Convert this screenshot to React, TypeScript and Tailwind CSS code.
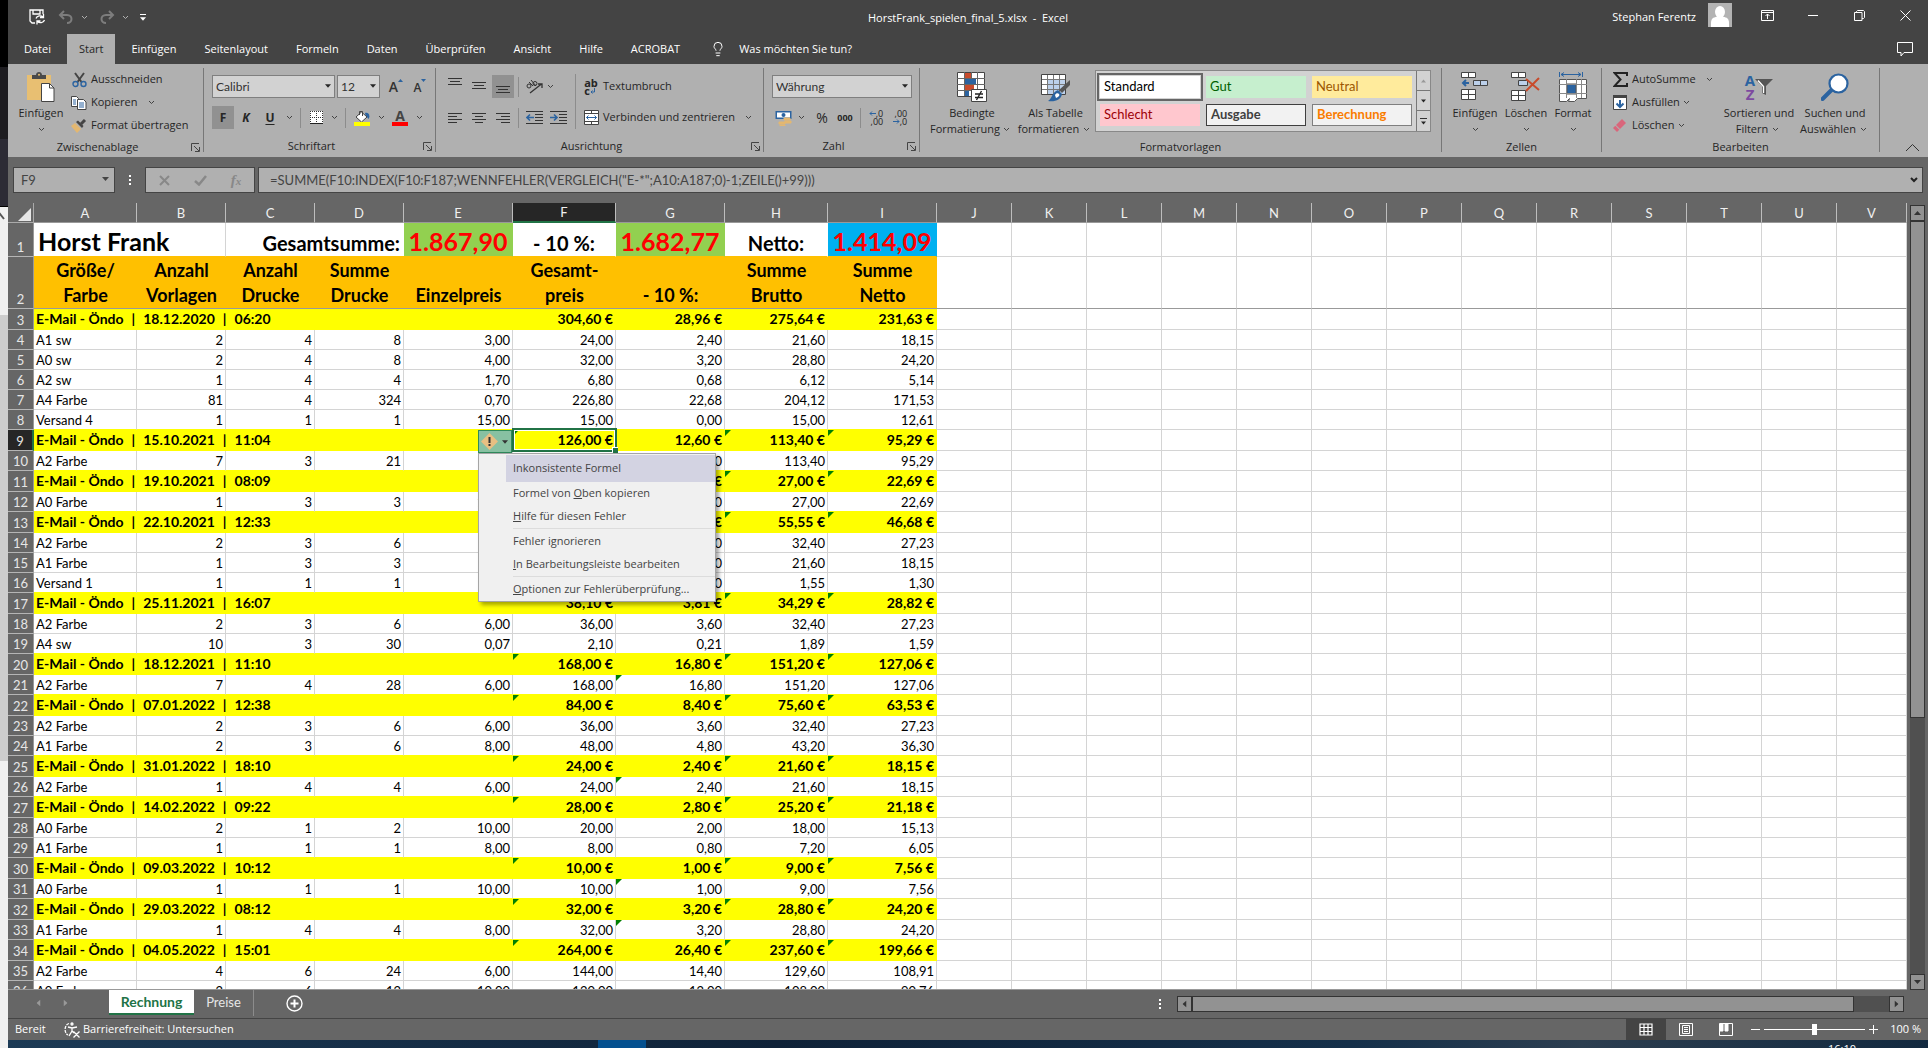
import type { ReactNode } from 'react';
import { clsx } from 'clsx';
import { Lightbulb } from 'lucide-react';

const TABS = ['Datei', 'Start', 'Einfügen', 'Seitenlayout', 'Formeln', 'Daten', 'Überprüfen', 'Ansicht', 'Hilfe', 'ACROBAT'];

/** Sheet columns; V takes whatever width is left in the window. */
const COLUMNS: [string, string][] = [
  ['A', 'w-[103px]'],
  ['B', 'w-[89px]'],
  ['C', 'w-[89px]'],
  ['D', 'w-[89px]'],
  ['E', 'w-[109px]'],
  ['F', 'w-[103px]'],
  ['G', 'w-[109px]'],
  ['H', 'w-[103px]'],
  ['I', 'w-[109px]'],
  ...'JKLMNOPQRSTU'.split('').map((c): [string, string] => [c, 'w-[75px]']),
  ['V', 'w-auto'],
];

const EMPTY = 'JKLMNOPQRSTUV'.split('');

interface SheetRow {
  no: number;
  label: string;
  /** B to I for an item, F to I for an order total. */
  values: string[];
  total?: boolean;
  /** Columns that carry the green error corner. */
  flags?: string;
}

const order = (no: number, when: string, values: string, flags = 'FHI'): SheetRow => ({
  no,
  label: `E-Mail - Öndo | ${when}`,
  values: values.split(' ').map((v) => `${v} €`),
  total: true,
  flags,
});

const item = (no: number, label: string, values: string, flags = ''): SheetRow => ({
  no,
  label,
  values: values.split(' '),
  flags,
});

const ROWS: SheetRow[] = [
  order(3, '18.12.2020 | 06:20', '304,60 28,96 275,64 231,63', ''),
  item(4, 'A1 sw', '2 4 8 3,00 24,00 2,40 21,60 18,15'),
  item(5, 'A0 sw', '2 4 8 4,00 32,00 3,20 28,80 24,20'),
  item(6, 'A2 sw', '1 4 4 1,70 6,80 0,68 6,12 5,14'),
  item(7, 'A4 Farbe', '81 4 324 0,70 226,80 22,68 204,12 171,53'),
  item(8, 'Versand 4', '1 1 1 15,00 15,00 0,00 15,00 12,61'),
  order(9, '15.10.2021 | 11:04', '126,00 12,60 113,40 95,29'),
  item(10, 'A2 Farbe', '7 3 21 6,00 126,00 12,60 113,40 95,29'),
  order(11, '19.10.2021 | 08:09', '30,00 3,00 27,00 22,69'),
  item(12, 'A0 Farbe', '1 3 3 10,00 30,00 3,00 27,00 22,69'),
  order(13, '22.10.2021 | 12:33', '61,55 6,00 55,55 46,68'),
  item(14, 'A2 Farbe', '2 3 6 6,00 36,00 3,60 32,40 27,23'),
  item(15, 'A1 Farbe', '1 3 3 8,00 24,00 2,40 21,60 18,15'),
  item(16, 'Versand 1', '1 1 1 1,55 1,55 0,00 1,55 1,30'),
  order(17, '25.11.2021 | 16:07', '38,10 3,81 34,29 28,82'),
  item(18, 'A2 Farbe', '2 3 6 6,00 36,00 3,60 32,40 27,23'),
  item(19, 'A4 sw', '10 3 30 0,07 2,10 0,21 1,89 1,59'),
  order(20, '18.12.2021 | 11:10', '168,00 16,80 151,20 127,06'),
  item(21, 'A2 Farbe', '7 4 28 6,00 168,00 16,80 151,20 127,06', 'G'),
  order(22, '07.01.2022 | 12:38', '84,00 8,40 75,60 63,53'),
  item(23, 'A2 Farbe', '2 3 6 6,00 36,00 3,60 32,40 27,23'),
  item(24, 'A1 Farbe', '2 3 6 8,00 48,00 4,80 43,20 36,30'),
  order(25, '31.01.2022 | 18:10', '24,00 2,40 21,60 18,15'),
  item(26, 'A2 Farbe', '1 4 4 6,00 24,00 2,40 21,60 18,15', 'G'),
  order(27, '14.02.2022 | 09:22', '28,00 2,80 25,20 21,18'),
  item(28, 'A0 Farbe', '2 1 2 10,00 20,00 2,00 18,00 15,13'),
  item(29, 'A1 Farbe', '1 1 1 8,00 8,00 0,80 7,20 6,05'),
  order(30, '09.03.2022 | 10:12', '10,00 1,00 9,00 7,56'),
  item(31, 'A0 Farbe', '1 1 1 10,00 10,00 1,00 9,00 7,56', 'G'),
  order(32, '29.03.2022 | 08:12', '32,00 3,20 28,80 24,20'),
  item(33, 'A1 Farbe', '1 4 4 8,00 32,00 3,20 28,80 24,20', 'G'),
  order(34, '04.05.2022 | 15:01', '264,00 26,40 237,60 199,66'),
  item(35, 'A2 Farbe', '4 6 24 6,00 144,00 14,40 129,60 108,91'),
  item(36, 'A0 Farbe', '2 6 12 10,00 120,00 12,00 108,00 90,76'),
];

const HEADINGS = [
  ['Größe/', 'Farbe'],
  ['Anzahl', 'Vorlagen'],
  ['Anzahl', 'Drucke'],
  ['Summe', 'Drucke'],
  ['Einzelpreis'],
  ['Gesamt-', 'preis'],
  ['- 10 %:'],
  ['Summe', 'Brutto'],
  ['Summe', 'Netto'],
];

/* ---------- small shared pieces ---------- */

function Chev({ className = 'w-[14px]' }: { className?: string }) {
  return (
    <span className={clsx('flex shrink-0 justify-center', className)}>
      <svg width="7" height="5" viewBox="0 0 7 5" fill="none" stroke="currentColor" opacity="0.8">
        <path d="M1 1l2.500 2.500L6 1" />
      </svg>
    </span>
  );
}

function Caret({ className }: { className?: string }) {
  return (
    <svg className={className} width="7" height="4" viewBox="0 0 7 4" fill="currentColor">
      <path d="M0 0h7L3.500 4z" />
    </svg>
  );
}

function Sep({ className = 'h-5' }: { className?: string }) {
  return <span className={clsx('mx-1 w-px shrink-0 bg-[#8c8c8c]', className)} />;
}

function IconBtn({ label, active, className = 'w-[22px]', children }: { label: string; active?: boolean; className?: string; children: ReactNode }) {
  return (
    <button
      type="button"
      aria-label={label}
      className={clsx('flex h-[23px] shrink-0 items-center justify-center', className, active && 'bg-[#919191]')}
    >
      {children}
    </button>
  );
}

function SmallBtn({ icon, label, chev, wide }: { icon: ReactNode; label: string; chev?: boolean; wide?: boolean }) {
  return (
    <button type="button" className="flex h-[23px] items-center whitespace-nowrap">
      <span className="mr-1 flex w-4 justify-center">{icon}</span>
      {label}
      {chev && <Chev className={wide ? 'w-7' : 'w-[14px]'} />}
    </button>
  );
}

function BigBtn({ icon, lines, className }: { icon: ReactNode; lines: [string, string?]; className?: string }) {
  return (
    <button type="button" className={clsx('flex shrink-0 flex-col items-center pt-2 leading-4 whitespace-nowrap', className)}>
      <span className="mb-[3px] flex h-[30px] items-center justify-center">{icon}</span>
      <span>{lines[0]}</span>
      <span className="flex h-4 items-center">
        {lines[1]}
        <Chev className={lines[1] ? 'w-[14px]' : 'w-2'} />
      </span>
    </button>
  );
}

function Group({ title, launcher, className, children }: { title: string; launcher?: boolean; className: string; children: ReactNode }) {
  return (
    <section className={clsx('flex shrink-0', className)}>
      <div className="flex min-w-0 flex-1 flex-col">
        <div className="flex h-[74px]">{children}</div>
        <div className="flex h-[21px] items-center">
          <span className="flex-1 text-center">{title}</span>
          {launcher && (
            <button type="button" aria-label={`${title} öffnen`} className="flex w-4 justify-end pr-[3px]">
              <svg width="9" height="9" viewBox="0 0 9 9" fill="none" stroke="#444">
                <path d="M.5 8V.5H8M3 3l5 5M8.500 4v4.500H4" />
              </svg>
            </button>
          )}
        </div>
      </div>
      <span className="mt-1 h-[84px] w-px bg-[#777]" />
    </section>
  );
}

function PickList({ label, value, className }: { label: string; value: string; className: string }) {
  return (
    <span className={clsx('relative flex h-[23px] shrink-0', className)}>
      <select aria-label={label} className="w-full appearance-none border border-[#7f7f7f] bg-[#d2d2d2] pl-[3px] font-['Lato',sans-serif] text-xs text-[#333]">
        <option>{value}</option>
      </select>
      <Caret className="pointer-events-none absolute top-[9px] right-[4px] w-[6px]" />
    </span>
  );
}

/** Horizontal strokes, given as [x1, x2] pairs. */
function Lines({ rows, gap = 3 }: { rows: [number, number][]; gap?: number }) {
  return (
    <svg width="14" height="12" viewBox="0 0 14 12" stroke="#333">
      {rows.map(([a, b], i) => (
        <path key={i} d={`M${a} ${i * gap + 1.5}H${b}`} />
      ))}
    </svg>
  );
}

/* ---------- ribbon ---------- */

function ClipboardGroup() {
  return (
    <Group title="Zwischenablage" launcher className="w-[196px]">
      <BigBtn
        className="w-[60px] pl-[6px]"
        lines={['Einfügen']}
        icon={
          <svg width="30" height="30" viewBox="0 0 30 30">
            <path d="M1 3h24v25H1z" fill="#e8bf72" />
            <path d="M6 7V3h4c0-4 6-4 6 0h4v4z" fill="#4a4a4a" />
            <circle cx="13" cy="2.800" r="1" fill="#e8bf72" />
            <path d="M15.500 11.500h8l4.500 4.500v13.500H15.500z" fill="#fff" stroke="#444" />
            <path d="M23.500 11.500V16H28" fill="none" stroke="#444" />
          </svg>
        }
      />
      <div className="pt-1 pl-[3px]">
        <SmallBtn
          label="Ausschneiden"
          icon={
            <svg width="15" height="16" viewBox="0 0 15 16" fill="none">
              <path d="M3 1l6.500 9M12 1L5.500 10" stroke="#444" strokeWidth="2" />
              <circle cx="3.500" cy="12" r="2.500" stroke="#2b63a0" strokeWidth="1.400" />
              <circle cx="11.500" cy="12" r="2.500" stroke="#2b63a0" strokeWidth="1.400" />
            </svg>
          }
        />
        <SmallBtn
          label="Kopieren"
          chev
          wide
          icon={
            <svg width="16" height="14" viewBox="0 0 16 14" fill="#fff" stroke="#444">
              <path d="M.5.5h5l2 2v8h-7z" />
              <path d="M2 4h3M2 6h3M2 8h3" stroke="#2b63a0" />
              <path d="M6.500 3.500h6l2.500 2.500v7.500H6.500z" />
              <path d="M8 7h5M8 9h5M8 11h5" stroke="#2b63a0" />
            </svg>
          }
        />
        <SmallBtn
          label="Format übertragen"
          icon={
            <svg width="16" height="14" viewBox="0 0 16 14">
              <path d="M0 7l4-3 6 6-4 4z" fill="#e3b770" />
              <path d="M5 3l2-1.500 5.500 5.500L11 9z" fill="#444" />
              <path d="M10 5l4-4" stroke="#444" strokeWidth="3" />
            </svg>
          }
        />
      </div>
    </Group>
  );
}

function FontGroup() {
  return (
    <Group title="Schriftart" launcher className="w-[232px]">
      <div className="flex flex-col gap-2 pt-[11px] pl-2">
        <div className="flex items-center">
          <PickList label="Schriftart" value="Calibri" className="mr-0.5 w-[123px]" />
          <PickList label="Schriftgrad" value="12" className="mr-1 w-[43px]" />
          <IconBtn label="Schriftgrad vergrößern" className="w-6">
            <span className="text-[14px] font-semibold text-[#333]">A</span>
            <svg className="mb-3" width="5" height="3" viewBox="0 0 5 3" fill="#2b63a0"><path d="M0 3h5L2.500 0z" /></svg>
          </IconBtn>
          <IconBtn label="Schriftgrad verkleinern" className="w-6">
            <span className="pt-0.5 text-xs font-semibold text-[#333]">A</span>
            <svg className="mb-3" width="5" height="3" viewBox="0 0 5 3" fill="#2b63a0"><path d="M0 0h5L2.500 3z" /></svg>
          </IconBtn>
        </div>
        <div className="flex items-center">
          <IconBtn label="Fett" active><b className="text-xs">F</b></IconBtn>
          <IconBtn label="Kursiv" className="w-6"><b className="text-xs italic">K</b></IconBtn>
          <IconBtn label="Unterstrichen" className="w-6"><b className="text-xs underline underline-offset-2">U</b></IconBtn>
          <Chev />
          <Sep />
          <IconBtn label="Rahmen">
            <svg width="13" height="13" viewBox="0 0 13 13">
              <path d="M0 0h13v13H0z" fill="#fff" />
              <path d="M.5 0v12M6.500 0v12M12.500 0v12M0 .5h13M0 6.500h13" stroke="#333" strokeDasharray="1 1" />
              <path d="M0 12.500h13" stroke="#222" />
            </svg>
          </IconBtn>
          <Chev />
          <Sep />
          <IconBtn label="Füllfarbe" className="w-6">
            <svg width="16" height="16" viewBox="0 0 16 16">
              <path d="M11 3c4-1 5.500 3 3.500 6l-3-4z" fill="#2b63a0" />
              <path d="M7.500 2L13 7l-5.500 5L2 7z" fill="#fff" stroke="#444" />
              <path d="M5.500 5V1.500h3V6" fill="none" stroke="#444" />
              <path d="M0 12h16v4H0z" fill="#ff0" />
            </svg>
          </IconBtn>
          <Chev />
          <IconBtn label="Schriftfarbe" className="w-6">
            <span className="flex flex-col items-center">
              <b className="h-3 text-[14px] leading-3 text-[#444]">A</b>
              <i className="h-1 w-4 bg-[#f00]" />
            </span>
          </IconBtn>
          <Chev />
        </div>
      </div>
    </Group>
  );
}

function Indent({ flip }: { flip?: boolean }) {
  return (
    <svg width="17" height="13" viewBox="0 0 17 13" fill="none" stroke="#333">
      <path d="M0 .5h17M9 3.500h8M9 6.500h8M9 9.500h8M0 12.500h17" />
      <path d={flip ? 'M0 6.500h7M4 3.500l3 3-3 3' : 'M8 6.500H1M4 3.500l-3 3 3 3'} stroke="#2b63a0" strokeWidth="1.600" />
    </svg>
  );
}

function AlignGroup() {
  return (
    <Group title="Ausrichtung" launcher className="w-[328px]">
      <div className="flex flex-col gap-2 pt-[11px] pl-2">
        <div className="flex items-center">
          <IconBtn label="Oben ausrichten"><span className="pb-2"><Lines rows={[[0, 14], [2, 12], [0, 14]]} /></span></IconBtn>
          <IconBtn label="Zentriert ausrichten" className="mx-0.5 w-[22px]"><Lines rows={[[0, 14], [2, 12], [0, 14]]} /></IconBtn>
          <IconBtn label="Unten ausrichten" active><span className="pt-2"><Lines rows={[[0, 14], [2, 12], [0, 14]]} /></span></IconBtn>
          <Sep />
          <IconBtn label="Ausrichtung">
            <svg width="17" height="15" viewBox="0 0 17 15" fill="none" stroke="#333">
              <circle cx="3" cy="7" r="2" /><path d="M3 3l4 4" />
              <circle cx="9" cy="4.500" r="2" /><path d="M5 1l5 6" />
              <path d="M4 14L15.500 5M12 5h4v4" strokeWidth="1.300" />
            </svg>
          </IconBtn>
          <Chev className="w-[10px]" />
        </div>
        <div className="flex items-center">
          <IconBtn label="Linksbündig"><Lines rows={[[0, 14], [0, 9], [0, 14], [0, 9]]} /></IconBtn>
          <IconBtn label="Zentriert" className="mx-0.5 w-[22px]"><Lines rows={[[0, 14], [3, 11], [0, 14], [3, 11]]} /></IconBtn>
          <IconBtn label="Rechtsbündig"><Lines rows={[[0, 14], [5, 14], [0, 14], [5, 14]]} /></IconBtn>
          <Sep />
          <IconBtn label="Einzug verkleinern"><Indent /></IconBtn>
          <IconBtn label="Einzug vergrößern" className="w-[26px]"><Indent flip /></IconBtn>
        </div>
      </div>
      <Sep className="mt-[10px] h-[55px]" />
      <div className="flex flex-col gap-2 pt-[11px] pl-[3px]">
        <SmallBtn
          label="Textumbruch"
          icon={
            <span className="flex flex-col text-left text-[11px] leading-[8px] font-bold">
              <span>ab</span>
              <span className="flex">
                c
                <svg width="5" height="7" viewBox="0 0 5 7" fill="none" stroke="#2b63a0"><path d="M4.500 1v4H1M2.500 3.500L1 5l1.500 1.500" /></svg>
              </span>
            </span>
          }
        />
        <SmallBtn
          label="Verbinden und zentrieren"
          chev
          wide
          icon={
            <svg width="15" height="15" viewBox="0 0 15 15" fill="none" stroke="#444">
              <path d="M.5.5h14v14H.5z" fill="#fff" />
              <path d="M.5 3.500h14M.5 11.500h14M7.500 0v3.500M7.500 11.500V15" />
              <path d="M2.500 7.500h10M4.500 5.500l-2 2 2 2M10.500 5.500l2 2-2 2" stroke="#2b63a0" />
            </svg>
          }
        />
      </div>
    </Group>
  );
}

function Decimals({ less }: { less?: boolean }) {
  return (
    <span className="flex flex-col text-[9px] leading-[8px] text-[#222]">
      <span className="flex items-center justify-end">
        {!less && <svg width="7" height="5" viewBox="0 0 7 5" fill="none" stroke="#2b63a0"><path d="M7 2.500H1M3 .5l-2 2 2 2" /></svg>}
        {less ? ',00' : ',0'}
      </span>
      <span className="flex items-center justify-end">
        {less && <svg width="7" height="5" viewBox="0 0 7 5" fill="none" stroke="#2b63a0"><path d="M0 2.500h6M4 .5l2 2-2 2" /></svg>}
        {less ? ',0' : ',00'}
      </span>
    </span>
  );
}

function NumberGroup() {
  return (
    <Group title="Zahl" launcher className="w-[156px]">
      <div className="flex flex-col gap-2 pt-[11px] pl-2">
        <PickList label="Zahlenformat" value="Währung" className="w-[140px]" />
        <div className="flex items-center">
          <IconBtn label="Buchhaltungszahlenformat">
            <svg width="17" height="16" viewBox="0 0 17 16">
              <path d="M.5 1h16v8H.5z" fill="#2b63a0" />
              <path d="M2 2.500h13v5H2z" fill="#fff" />
              <circle cx="8.500" cy="5" r="2" fill="#2b63a0" />
              <path d="M9 8h6v2H9zM10 11h6v2h-6zM4 12h6v2H4zM5 15h5v1H5z" fill="#e3b770" stroke="#e3b770" />
            </svg>
          </IconBtn>
          <Chev />
          <IconBtn label="Prozentformat" className="ml-0.5 w-6"><span className="text-[14px]">%</span></IconBtn>
          <IconBtn label="1.000er-Trennzeichen"><b className="text-[9px]">000</b></IconBtn>
          <Sep />
          <IconBtn label="Dezimalstelle hinzufügen"><Decimals /></IconBtn>
          <IconBtn label="Dezimalstelle löschen" className="w-[26px]"><Decimals less /></IconBtn>
        </div>
      </div>
    </Group>
  );
}

const CELL_STYLES: [string, string][] = [
  ['Standard', 'bg-white text-black outline-2 outline-offset-1 outline-[#666]'],
  ['Gut', 'bg-[#c6efce] text-[#006100]'],
  ['Neutral', 'bg-[#ffeb9c] text-[#9c5700]'],
  ['Schlecht', 'bg-[#ffc7ce] text-[#9c0006]'],
  ['Ausgabe', 'border border-[#3f3f3f] bg-[#f2f2f2] font-bold text-[#3f3f3f]'],
  ['Berechnung', 'border border-[#7f7f7f] bg-[#f2f2f2] font-bold text-[#fa7d00]'],
];

function StylesGroup() {
  return (
    <Group title="Formatvorlagen" className="w-[522px]">
      <BigBtn
        className="ml-2 w-[88px]"
        lines={['Bedingte', 'Formatierung']}
        icon={
          <svg width="30" height="30" viewBox="0 0 30 30">
            <path d="M.5.5h27v24H.5z" fill="#fff" stroke="#444" />
            <path d="M8 1h6v5H8zM8 13h9v5H8z" fill="#c84b2c" />
            <path d="M8 7h11v5H8zM8 19h4v5H8z" fill="#2b63a0" />
            <path d="M7.500 0v24M14.500 0v7M20.500 0v24M0 6.500h28M0 12.500h28M0 18.500h28" stroke="#666" />
            <path d="M14.500 17.500h15v12h-15z" fill="#fff" stroke="#444" />
            <path d="M18 22h8M18 25.500h8M24.500 19l-5 9" stroke="#222" strokeWidth="1.400" />
          </svg>
        }
      />
      <BigBtn
        className="w-[79px]"
        lines={['Als Tabelle', 'formatieren']}
        icon={
          <svg width="30" height="30" viewBox="0 0 30 30">
            <path d="M.5 2.500h24v20H.5z" fill="#fff" stroke="#444" />
            <path d="M7 8h17v14H7z" fill="#bcd0ea" />
            <path d="M6.500 3v19M12.500 3v19M18.500 3v19M1 7.500h23M1 12.500h23M1 17.500h23" stroke="#777" />
            <path d="M29 8v5l-8 8-3-3z" fill="#555" />
            <path d="M17 18l4 4c-1 6-7 8-14 7 4-2 4-9 10-11z" fill="#2b63a0" />
            <path d="M14 23c1-2 3-2 4-1s0 3-3 4z" fill="#fff" />
          </svg>
        }
      />
      <div className="mt-[6px] mr-[10px] flex h-[62px] flex-1 border border-[#888] bg-[#d2d2d2]">
        <div className="grid flex-1 grid-cols-3 gap-[6px] py-[5px] pr-1 pl-1">
          {CELL_STYLES.map(([name, cls]) => (
            <button key={name} type="button" className={clsx("flex h-[22px] items-center pl-1 font-['Lato',sans-serif] text-[13px]", cls)}>
              {name}
            </button>
          ))}
        </div>
        <div className="grid w-[14px] grid-rows-3 divide-y divide-[#777] border-l border-[#777]">
          <button type="button" aria-label="Nach oben" className="flex items-center justify-center text-[#999]"><Caret className="w-[5px] rotate-180" /></button>
          <button type="button" aria-label="Nach unten" className="flex items-center justify-center"><Caret className="w-[5px]" /></button>
          <button type="button" aria-label="Mehr" className="flex flex-col items-center justify-center gap-0.5">
            <i className="h-px w-[7px] bg-[#333]" />
            <Caret className="w-[5px]" />
          </button>
        </div>
      </div>
    </Group>
  );
}

function CellsGroup() {
  return (
    <Group title="Zellen" className="w-[160px]">
      <BigBtn
        className="ml-[7px] w-[52px]"
        lines={['Einfügen']}
        icon={
          <svg width="28" height="30" viewBox="0 0 28 30" fill="#fff" stroke="#444">
            <path d="M.5.500h14v5H.5zM7.500.500v5M.5 17.500h14v10H.5zM7.500 17.500v10M.5 22.500h14" />
            <path d="M12.500 8.500h14v5h-14zM19.500 8.500v5" fill="#bcd0ea" />
            <path d="M8 11H2M5 8l-3 3 3 3" fill="none" stroke="#2b63a0" strokeWidth="2" />
          </svg>
        }
      />
      <BigBtn
        className="w-[50px]"
        lines={['Löschen']}
        icon={
          <svg width="30" height="30" viewBox="0 0 30 30" fill="#fff" stroke="#444">
            <path d="M.5.500h14v5H.5zM7.500.500v5M.5 18.500h14v10H.5zM7.500 18.500v10M.5 23.500h14" />
            <path d="M7.500 8.500h9v5h-9z" fill="#bcd0ea" />
            <path d="M15 7l13 11M28 6L15 19" stroke="#c84b2c" strokeWidth="2" />
          </svg>
        }
      />
      <BigBtn
        className="w-[44px]"
        lines={['Format']}
        icon={
          <svg width="29" height="30" viewBox="0 0 29 30" fill="none" stroke="#555">
            <path d="M.5 0v5M23.500 0v5M2 2.500h20M5 .5l-3 2 3 2M19 .5l3 2-3 2" stroke="#2b63a0" />
            <path d="M.5 7.500h27v19h-9l-3 3h-6l1-3-3 3h-7z" fill="#fff" />
            <path d="M8 12h9v10H8z" fill="#2b63a0" />
            <path d="M7.500 7v19M17.500 7v19M22.500 7v19M0 12.500h28M0 21.500h28" stroke="#888" />
          </svg>
        }
      />
    </Group>
  );
}

function EditGroup() {
  return (
    <Group title="Bearbeiten" className="w-[278px]">
      <div className="w-[118px] pt-1 pl-[10px]">
        <SmallBtn
          label="AutoSumme"
          chev
          wide
          icon={<svg width="15" height="15" viewBox="0 0 15 15" fill="none" stroke="#222" strokeWidth="2"><path d="M14 4V1H1.500l6 6.500L1.500 14H14v-3" /></svg>}
        />
        <SmallBtn
          label="Ausfüllen"
          chev
          icon={
            <svg width="14" height="15" viewBox="0 0 14 15">
              <path d="M.5.500h13v14H.5z" fill="#fff" stroke="#444" />
              <path d="M0 0h14v3H0z" fill="#444" />
              <path d="M7 5v7M3.500 8.500L7 12l3.500-3.500" fill="none" stroke="#2b63a0" strokeWidth="2" />
            </svg>
          }
        />
        <SmallBtn
          label="Löschen"
          chev
          icon={
            <svg width="14" height="13" viewBox="0 0 14 13" fill="#d9667b">
              <path d="M9 0l4 4-6 6-4-4z" />
              <path d="M2.300 6.700l4 4L4 13 0 9z" />
            </svg>
          }
        />
      </div>
      <BigBtn
        className="w-[78px]"
        lines={['Sortieren und', 'Filtern']}
        icon={
          <span className="flex items-center">
            <span className="flex flex-col items-center text-[15px] leading-[14px] font-bold">
              <span className="text-[#2b63a0]">A</span>
              <span className="text-[#7d4aa0]">Z</span>
            </span>
            <svg width="18" height="18" viewBox="0 0 18 18">
              <path d="M0 1h18l-7 7v9l-4-2V8z" fill="#555" />
              <path d="M3 2.500l5.500 6V15" fill="none" stroke="#fff" strokeWidth="1.400" />
            </svg>
          </span>
        }
      />
      <BigBtn
        className="w-[74px]"
        lines={['Suchen und', 'Auswählen']}
        icon={
          <svg width="28" height="28" viewBox="0 0 28 28">
            <path d="M1.500 26L11 16.500" stroke="#2b63a0" strokeWidth="4" strokeLinecap="round" />
            <circle cx="17.500" cy="10.500" r="9" fill="#fff" stroke="#2b63a0" strokeWidth="2.200" />
          </svg>
        }
      />
    </Group>
  );
}

function Ribbon() {
  return (
    <div className="flex h-[93px] shrink-0 overflow-hidden bg-[#b0b0b0] text-[#262626]">
      <ClipboardGroup />
      <FontGroup />
      <AlignGroup />
      <NumberGroup />
      <StylesGroup />
      <CellsGroup />
      <EditGroup />
      <button type="button" aria-label="Menüband reduzieren" className="mt-auto mr-2 mb-[5px] ml-auto">
        <svg width="15" height="9" viewBox="0 0 15 9" fill="none" stroke="#333"><path d="M1 8l6.500-6.500L14 8" /></svg>
      </button>
    </div>
  );
}

/* ---------- window chrome ---------- */

function TitleBar() {
  return (
    <header className="grid h-[34px] shrink-0 grid-cols-[1fr_auto_1fr] items-center">
      <div className="flex items-center gap-[7px] pl-[21px]">
        <button type="button" aria-label="Speichern">
          <svg width="17" height="16" viewBox="0 0 17 16" fill="none" stroke="#fff" strokeWidth="1.300">
            <path d="M6 14H3L1 12V1h13v4M4 1v4h7V1" />
            <path d="M7 9.500c1-3 5-3.500 7-1.500M14.500 5v3.500H11M15.500 11c-1 3-5 3.500-7 1.500M8 15.500V12h3.500" />
          </svg>
        </button>
        <button type="button" aria-label="Rückgängig" className="ml-[5px] flex items-center text-[#7d7d7d]">
          <svg width="16" height="14" viewBox="0 0 16 14" fill="none" stroke="currentColor" strokeWidth="2"><path d="M6 1L2 5l4 4M2 5h7c6 0 6 8 0 8" /></svg>
          <Chev className="ml-0.5 w-4 text-[#ccc]" />
        </button>
        <button type="button" aria-label="Wiederholen" className="flex items-center text-[#7d7d7d]">
          <svg width="16" height="14" viewBox="0 0 16 14" fill="none" stroke="currentColor" strokeWidth="2"><path d="M10 1l4 4-4 4M14 5H7c-6 0-6 8 0 8" /></svg>
          <Chev className="ml-0.5 w-4 text-[#ccc]" />
        </button>
        <button type="button" aria-label="Symbolleiste anpassen" className="flex flex-col items-center gap-0.5">
          <i className="h-px w-[6px] bg-white" />
          <Caret className="w-[6px]" />
        </button>
      </div>
      <h1 className="pt-0.5 whitespace-pre">HorstFrank_spielen_final_5.xlsx  -  Excel</h1>
      <div className="flex items-center justify-end">
        <span className="mr-3">Stephan Ferentz</span>
        <svg className="mr-3 -mt-1" width="24" height="24" viewBox="0 0 24 24">
          <path d="M0 0h24v24H0z" fill="#b3b3b3" />
          <path d="M3 24v-4c0-4 2-6 6-6h6c4 0 6 2 6 6v4z" fill="#fff" />
          <ellipse cx="12" cy="9" rx="5" ry="6" fill="#fff" />
        </svg>
        <button type="button" aria-label="Menüband-Anzeigeoptionen" className="flex w-[46px] justify-center pb-1">
          <svg width="13" height="11" viewBox="0 0 13 11" fill="none" stroke="#fff"><path d="M.5.500h12v10H.5zM.5 2.500h12M6.500 9V4M4.500 6l2-2 2 2" /></svg>
        </button>
        <button type="button" aria-label="Minimieren" className="flex w-[46px] justify-center pb-1"><i className="h-px w-[10px] bg-white" /></button>
        <button type="button" aria-label="Verkleinern" className="flex w-[46px] justify-center pb-1">
          <svg width="11" height="11" viewBox="0 0 11 11" fill="none" stroke="#fff"><path d="M.5 2.500h7.500v8H.5zM2.500 2.500V1.500l1-1h6l1 1v6l-1 1H8" /></svg>
        </button>
        <button type="button" aria-label="Schließen" className="flex w-[46px] justify-center pb-1">
          <svg width="11" height="11" viewBox="0 0 11 11" stroke="#fff"><path d="M.5.500l10 10M10.500.500l-10 10" /></svg>
        </button>
      </div>
    </header>
  );
}

function TabBar() {
  return (
    <nav className="flex h-[30px] shrink-0 items-center pl-0.5">
      {TABS.map((tab) => (
        <button
          key={tab}
          type="button"
          className={clsx('h-full', tab === 'Start' ? 'mx-0.5 bg-[#b0b0b0] px-3 text-[#262626]' : 'px-[14px] text-white')}
        >
          {tab}
        </button>
      ))}
      <button type="button" className="ml-4 flex items-center gap-[13px]">
        <Lightbulb size={16} strokeWidth={1.5} />
        Was möchten Sie tun?
      </button>
      <button type="button" aria-label="Kommentare" className="mr-[15px] ml-auto">
        <svg width="16" height="15" viewBox="0 0 16 15" fill="none" stroke="#fff"><path d="M.5.500h15v10H7l-3 3.500v-3.500H.5z" /></svg>
      </button>
    </nav>
  );
}

function FormulaBar() {
  return (
    <div className="flex h-[46px] shrink-0 items-start bg-[#666] pt-[10px] pr-[5px] pl-[5px] font-['Lato',sans-serif] text-[13px] text-[#444]">
      <span className="relative flex w-[102px]">
        <input aria-label="Namenfeld" defaultValue="F9" className="h-[26px] w-full border border-[#444] bg-[#b0b0b0] pl-[7px]" />
        <Caret className="absolute top-[10px] right-[6px]" />
      </span>
      <span className="flex h-[26px] w-[30px] flex-col items-center justify-center gap-0.5">
        <i className="size-0.5 bg-white" />
        <i className="size-0.5 bg-white" />
        <i className="size-0.5 bg-white" />
      </span>
      <div className="mr-[3px] flex h-[26px] w-[110px] items-center border border-[#444] bg-[#b0b0b0] text-[#888]">
        <button type="button" aria-label="Abbrechen" className="flex flex-1 justify-center">
          <svg width="11" height="11" viewBox="0 0 11 11" stroke="currentColor" strokeWidth="2"><path d="M1 1l9 9M10 1l-9 9" /></svg>
        </button>
        <button type="button" aria-label="Eingeben" className="flex flex-1 justify-center">
          <svg width="13" height="11" viewBox="0 0 13 11" fill="none" stroke="currentColor" strokeWidth="2.500"><path d="M1 6l4 3.500L12 1" /></svg>
        </button>
        <button type="button" aria-label="Funktion einfügen" className="flex-1 font-['Liberation_Serif',serif] text-[15px] font-bold italic">
          f<span className="text-[11px]">x</span>
        </button>
      </div>
      <span className="relative flex flex-1">
        <input
          aria-label="Bearbeitungsleiste"
          defaultValue={'=SUMME(F10:INDEX(F10:F187;WENNFEHLER(VERGLEICH("E-*";A10:A187;0)-1;ZEILE()+99)))'}
          className="h-[26px] w-full border border-[#444] bg-[#b0b0b0] pl-[11px]"
        />
        <svg className="absolute top-[10px] right-[5px]" width="8" height="6" viewBox="0 0 8 6" fill="none" stroke="#222" strokeWidth="2"><path d="M1 1l3 3 3-3" /></svg>
      </span>
    </div>
  );
}

/* ---------- sheet ---------- */

function Flag() {
  return <span className="absolute top-0 left-0 border-t-[6px] border-r-[6px] border-t-[#008000] border-r-transparent" />;
}

function RowHead({ no }: { no: number }) {
  return (
    <th
      scope="row"
      className={clsx(
        'border-b border-b-[#b5b5b5] p-0 align-bottom text-[13px] leading-[18px] font-normal text-[#e6e6e6]',
        no === 9 ? 'border-r-2 border-r-[#217346] bg-[#262626]' : 'border-r border-r-[#999] bg-[#666]',
      )}
    >
      {no}
    </th>
  );
}

function Blank({ className }: { className?: string }) {
  return EMPTY.map((c) => <td key={c} className={clsx('border-r border-b border-r-[#d4d4d4]', className ?? 'border-b-[#d4d4d4]')} />);
}

/** Order heading, its parts set apart by spaced bars. */
function OrderLabel({ text }: { text: string }) {
  return text.split(' | ').map((part, i) => (
    <span key={part}>
      {i > 0 && <span className="mx-2">|</span>}
      {part}
    </span>
  ));
}

function Row({ row, next }: { row: SheetRow; next?: SheetRow }) {
  const cols = row.total ? 'FGHI' : 'BCDEFGHI';
  const edge = row.total
    ? 'border-[#ff0] bg-[#ff0] text-[14px] font-bold'
    : clsx('border-r border-r-[#d4d4d4] text-[13px]', next?.total ? 'border-b-[#ff0]' : 'border-b-[#d4d4d4]');
  return (
    <tr className={row.total ? 'h-[21px]' : 'h-5'}>
      <RowHead no={row.no} />
      <td colSpan={row.total ? 5 : 1} className={clsx('border-b p-0 pl-0.5 leading-[18px]', edge)}>
        {row.total ? <OrderLabel text={row.label} /> : row.label}
      </td>
      {row.values.map((v, i) => (
        <td key={cols[i]} className={clsx('relative border-b p-0 pr-0.5 text-right leading-[18px]', row.total && 'border-r', edge)}>
          {row.flags?.includes(cols[i]) && <Flag />}
          {v}
          {row.no === 9 && cols[i] === 'F' && (
            <span className="absolute -top-0.5 -right-0.5 -bottom-0.5 -left-px z-10 border-2 border-[#217346] shadow-[inset_0_0_0_1px_white]">
              <i className="absolute -right-[3px] -bottom-[3px] size-[6px] border-t border-l border-white bg-[#217346]" />
            </span>
          )}
        </td>
      ))}
      <Blank />
    </tr>
  );
}

function ErrorMenu() {
  const entry = 'block h-[23px] w-full pl-[34px] text-left';
  return (
    <>
      <button
        type="button"
        aria-label="Fehlerüberprüfung"
        className="absolute top-[227px] left-[470px] z-20 flex h-[23px] w-[34px] items-center justify-between border border-[#2f8a5c] bg-[#88c1a2] pr-[3px] pl-0.5 text-[#333]"
      >
        <svg width="17" height="17" viewBox="0 0 17 17">
          <path d="M8.500 0L17 8.500 8.500 17 0 8.500z" fill="#e8bf82" />
          <path d="M8.500 4v6M8.500 11v2" stroke="#333" strokeWidth="2" />
        </svg>
        <Caret className="w-[6px]" />
      </button>
      <div
        role="menu"
        className="absolute top-[250px] left-[470px] z-20 w-[238px] border border-[#a5a5a5] bg-[#f0f0f0] pt-px text-[#444] shadow-[3px_3px_4px_rgba(0,0,0,0.35)]"
      >
        <button type="button" role="menuitem" className="ml-[27px] block h-[27px] w-[209px] bg-[#d3d3e2] pl-[7px] text-left">Inkonsistente Formel</button>
        <button type="button" role="menuitem" className={entry}>Formel von <u>O</u>ben kopieren</button>
        <button type="button" role="menuitem" className={entry}><u>H</u>ilfe für diesen Fehler</button>
        <hr className="mb-px ml-[34px] border-[#dcdcdc]" />
        <button type="button" role="menuitem" className={entry}>Fehler i<u>g</u>norieren</button>
        <button type="button" role="menuitem" className={entry}><u>I</u>n Bearbeitungsleiste bearbeiten</button>
        <hr className="mb-px ml-[34px] border-[#dcdcdc]" />
        <button type="button" role="menuitem" className={entry}><u>O</u>ptionen zur Fehlerüberprüfung...</button>
      </div>
    </>
  );
}

function Sheet() {
  const sum = 'border-r border-b border-r-transparent border-b-[#ffc000] p-0 text-center align-bottom';
  const big = 'text-[25px] leading-[30px]';
  const mid = 'text-[20px] leading-[26px]';
  return (
    <div className="flex min-h-0 flex-1 bg-[#666]">
      <div className="relative min-w-0 flex-1 overflow-hidden border-b border-b-[#999]">
        <table className="w-full table-fixed border-separate border-spacing-0 bg-white font-['Lato',sans-serif] text-black">
          <colgroup>
            <col className="w-[26px]" />
            {COLUMNS.map(([c, w]) => <col key={c} className={w} />)}
          </colgroup>
          <thead>
            <tr className="h-5">
              <th className="border-r border-b border-[#aaa] bg-[#666] p-0">
                <svg className="mt-1 ml-[10px]" width="13" height="13" viewBox="0 0 13 13"><path d="M13 0v13H0z" fill="#e6e6e6" /></svg>
              </th>
              {COLUMNS.map(([c]) => (
                <th
                  key={c}
                  scope="col"
                  className={clsx(
                    'border-r border-r-[#bdbdbd] p-0 text-[13px] leading-[18px] font-normal text-[#f0f0f0]',
                    c === 'F' ? 'border-b-2 border-b-[#217346] bg-[#262626]' : 'border-b border-b-[#999] bg-[#666]',
                  )}
                >
                  {c}
                </th>
              ))}
            </tr>
          </thead>
          <tbody>
            <tr className="h-[34px] font-bold">
              <RowHead no={1} />
              <td colSpan={2} className={clsx('border-r border-b border-r-[#d4d4d4] border-b-[#ffc000] p-0 pl-1 align-bottom', big)}>Horst Frank</td>
              <td colSpan={2} className={clsx('border-b border-b-[#ffc000] p-0 pr-1 text-right align-bottom', mid)}>Gesamtsumme:</td>
              <td className={clsx(sum, big, 'bg-[#92d050] text-[#f00]')}>1.867,90</td>
              <td className={clsx(sum, mid)}>- 10 %:</td>
              <td className={clsx(sum, big, 'bg-[#92d050] text-[#f00]')}>1.682,77</td>
              <td className={clsx(sum, mid)}>Netto:</td>
              <td className={clsx(sum, big, 'bg-[#00b0f0] text-[#f00]')}>1.414,09</td>
              <Blank />
            </tr>
            <tr className="h-[52px] font-bold">
              <RowHead no={2} />
              {HEADINGS.map((lines, i) => (
                <td key={i} className="border-b border-b-[#999] bg-[#ffc000] p-0 text-center align-bottom text-[18px] leading-[25px]">
                  {lines.map((l) => <div key={l}>{l}</div>)}
                </td>
              ))}
              <Blank className="border-b-[#999]" />
            </tr>
            {ROWS.map((row, i) => <Row key={row.no} row={row} next={ROWS[i + 1]} />)}
          </tbody>
        </table>
        <ErrorMenu />
      </div>
      <div className="flex w-[21px] shrink-0 flex-col px-[3px] pt-0.5">
        <button type="button" aria-label="Nach oben" className="flex h-4 items-center justify-center border border-[#333] bg-[#929292] text-[#333]"><Caret className="rotate-180" /></button>
        <div className="flex-1 bg-[#505050]">
          <div className="h-[66%] border border-[#333] bg-[#929292]" />
        </div>
        <button type="button" aria-label="Nach unten" className="flex h-4 items-center justify-center border border-[#333] bg-[#929292] text-[#333]"><Caret /></button>
      </div>
    </div>
  );
}

function SheetTabs() {
  return (
    <div className="flex h-7 shrink-0 items-start bg-[#666] text-[#e6e6e6]">
      <div className="flex h-[26px] w-[101px] items-center gap-5 pl-[27px] text-[#999]">
        <button type="button" aria-label="Vorheriges Blatt"><Caret className="w-[7px] rotate-90" /></button>
        <button type="button" aria-label="Nächstes Blatt"><Caret className="w-[7px] -rotate-90" /></button>
      </div>
      <button type="button" className="h-[25px] w-[85px] border-b-2 border-[#217346] bg-white font-['Lato',sans-serif] text-[14px] font-bold text-[#217346]">Rechnung</button>
      <button type="button" className="h-[26px] w-[60px] border-r border-[#8c8c8c] font-['Lato',sans-serif] text-[13px]">Preise</button>
      <button type="button" aria-label="Neues Blatt" className="ml-8 flex h-[26px] items-center">
        <svg width="17" height="17" viewBox="0 0 17 17" fill="none" stroke="#fff"><circle cx="8.500" cy="8.500" r="7.500" strokeWidth="1.400" /><path d="M8.500 4.500v8M4.500 8.500h8" strokeWidth="2" /></svg>
      </button>
      <div className="mt-[6px] mr-6 ml-auto flex h-4 w-[745px] items-center">
        <span className="mr-4 flex flex-col gap-0.5">
          <i className="size-0.5 bg-white" />
          <i className="size-0.5 bg-white" />
          <i className="size-0.5 bg-white" />
        </span>
        <button type="button" aria-label="Nach links" className="flex h-full w-[15px] items-center justify-center border border-[#333] bg-[#929292] text-[#333]"><Caret className="rotate-90" /></button>
        <div className="h-full flex-1 bg-[#505050]"><div className="h-full w-[95%] border border-[#333] bg-[#929292]" /></div>
        <button type="button" aria-label="Nach rechts" className="flex h-full w-[15px] items-center justify-center border border-[#333] bg-[#929292] text-[#333]"><Caret className="-rotate-90" /></button>
      </div>
    </div>
  );
}

function StatusBar() {
  return (
    <footer className="flex h-[22px] shrink-0 items-center border-t border-[#444] bg-[#666] pl-[7px]">
      <span className="w-[49px]">Bereit</span>
      <button type="button" className="flex items-center gap-[3px]">
        <svg width="16" height="16" viewBox="0 0 16 16" fill="none" stroke="#fff" strokeWidth="1.300">
          <path d="M5 1.500C0 3 0 11 4 13" strokeDasharray="3 1" />
          <circle cx="8" cy="2" r="1" />
          <path d="M4 5l4 1 5-1M8 6v3l-3 5M8 9l2 2M9.500 9.500l6 6M15.500 9.500l-6 6" />
        </svg>
        Barrierefreiheit: Untersuchen
      </button>
      <button type="button" aria-label="Normal" className="ml-auto flex h-full w-10 items-center justify-center bg-[#444]">
        <svg width="14" height="13" viewBox="0 0 14 13" fill="none" stroke="#fff" strokeWidth="1.200"><path d="M1 1h12v11H1zM5 1v11M9 1v11M1 4.500h12M1 8.500h12" /></svg>
      </button>
      <button type="button" aria-label="Seitenlayout" className="flex w-10 justify-center">
        <svg width="14" height="13" viewBox="0 0 14 13" fill="none" stroke="#fff"><path d="M.5.500h13v12H.5zM3.500 2.500h7v8h-7zM5 4.500h4M5 6.500h4M5 8.500h4" /></svg>
      </button>
      <button type="button" aria-label="Umbruchvorschau" className="flex w-10 justify-center">
        <svg width="14" height="13" viewBox="0 0 14 13" fill="none" stroke="#fff"><path d="M.5.500h13v12H.5z" /><path d="M1 1h3v7H1zM6 1h3v7H6z" fill="#fff" /></svg>
      </button>
      <button type="button" aria-label="Verkleinern" className="ml-[5px] flex w-[9px]"><i className="h-px w-full bg-white" /></button>
      <input
        type="range"
        aria-label="Zoom"
        defaultValue={50}
        className="mx-1 h-4 w-[101px] appearance-none bg-[linear-gradient(#fff,#fff)] bg-[length:100%_1px] bg-center bg-no-repeat [&::-webkit-slider-thumb]:h-[11px] [&::-webkit-slider-thumb]:w-[5px] [&::-webkit-slider-thumb]:appearance-none [&::-webkit-slider-thumb]:bg-white"
      />
      <button type="button" aria-label="Vergrößern">
        <svg width="9" height="9" viewBox="0 0 9 9" stroke="#fff"><path d="M4.500 0v9M0 4.500h9" /></svg>
      </button>
      <span className="mr-[7px] ml-3">100 %</span>
    </footer>
  );
}

export default function App() {
  return (
    <div className="flex h-screen overflow-hidden font-['Open_Sans',sans-serif] text-[11px] text-white">
      {/* slice of the window behind */}
      <div className="flex w-2 shrink-0 flex-col bg-[#f0f0f0]">
        <div className="h-[67px] bg-black" />
        <div className="h-[72px] bg-[#1d1c20]" />
        <div className="h-[68px] border-b border-black bg-[#2c2b35]" />
        <svg className="h-[108px] w-2 pb-[92px]" viewBox="0 0 8 16" fill="none" stroke="#555" strokeWidth="2"><path d="M-3 10l3-3 4 5" /></svg>
        <div className="h-[446px] bg-[#cdcdcd]" />
      </div>
      <div className="flex min-w-0 flex-1 flex-col bg-[#444]">
        <TitleBar />
        <TabBar />
        <Ribbon />
        <FormulaBar />
        <Sheet />
        <SheetTabs />
        <StatusBar />
        <div className="flex h-2 shrink-0 overflow-hidden bg-[linear-gradient(90deg,#1c3a55,#0f2238_40%,#15304a_70%,#2c3e50_82%,#12293f)]">
          <span className="ml-[590px] w-12 bg-[#04508f]" />
          <span className="mt-[3px] mr-[72px] ml-auto leading-3">16:10</span>
        </div>
      </div>
    </div>
  );
}
